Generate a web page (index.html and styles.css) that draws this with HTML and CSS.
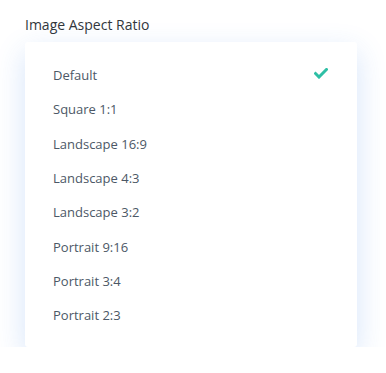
FILE: index.html
```html
<!DOCTYPE html>
<html lang="en">

<head>
    <meta charset="UTF-8">
    <meta name="viewport" content="width=device-width, initial-scale=1.0">
    <title>Image Aspect Ratio</title>
    <link rel="stylesheet" href="styles.css">
</head>

<body>

    <div class="field">
        <label class="field-label">Image Aspect Ratio</label>

        <!-- Dropdown options -->
        <div class="dropdown">
            <ul class="options">
                <li class="option selected">
                    <span>Default</span>
                    <svg class="check" width="14" height="11" viewBox="0 0 14 11">
                        <path d="M1.5 5.5 L5 9 L12.5 1.5" fill="none" stroke="#2ebfa5" stroke-width="3" stroke-linecap="square"/>
                    </svg>
                </li>
                <li class="option">Square 1:1</li>
                <li class="option">Landscape 16:9</li>
                <li class="option">Landscape 4:3</li>
                <li class="option">Landscape 3:2</li>
                <li class="option">Portrait 9:16</li>
                <li class="option">Portrait 3:4</li>
                <li class="option">Portrait 2:3</li>
            </ul>
        </div>
    </div>

</body>

</html>
```

FILE: styles.css
```css
body {
    margin: 0;
    background: #fff;
    font-family: "Open Sans", Arial, sans-serif;
}

.field {
    padding: 14px 29px 0 25px;
}

.field-label {
    display: block;
    font-size: 14px;
    color: #32373c;
    line-height: 22px;
    margin-bottom: 6px;
}

.dropdown {
    position: relative;
    background: #fff;
    border-radius: 3px;
    box-shadow: 0 10px 30px rgba(43, 120, 228, 0.2);
    padding: 16px 0 15px;
}

/* sliver of the select box under the menu */
.dropdown:after {
    content: "";
    position: absolute;
    right: 1px;
    bottom: -4px;
    width: 92px;
    height: 4px;
    background: #dce7f5;
    border-radius: 0 0 3px 3px;
    z-index: -1;
}

.options {
    list-style: none;
    margin: 0;
    padding: 0;
}

.option {
    display: flex;
    align-items: center;
    justify-content: space-between;
    height: 34.3px;
    padding: 0 29px 0 28px;
    font-size: 13px;
    font-weight: 500;
    color: #4c5866;
}

.check {
    margin-top: -3px;
}
```
